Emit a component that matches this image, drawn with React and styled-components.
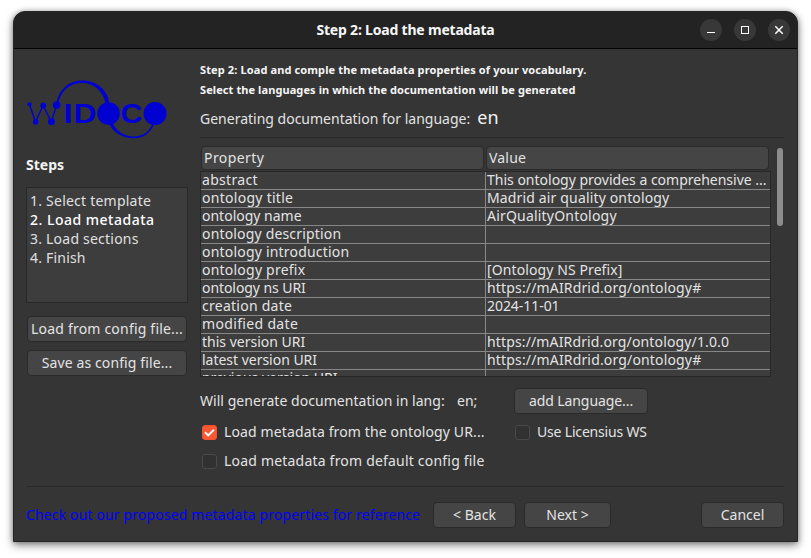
import React from 'react';
import styled, { createGlobalStyle } from 'styled-components';

const Global = createGlobalStyle`
  * { box-sizing: border-box; }
  body { margin: 0; background: #fff; overflow: hidden; }
`;

const Page = styled.div`
  width: 811px;
  height: 558px;
  padding: 11px 13px 16px;
  background: #fff;
  color: #e3e3e3;
  font: 14px/18px "Noto Sans", "Open Sans", sans-serif;
`;

const Window = styled.div`
  display: flex;
  flex-direction: column;
  width: 785px;
  height: 531px;
  background: #353535;
  border: 1px solid #262626;
  border-radius: 12px 12px 0 0;
  box-shadow: 0 3px 8px rgba(0, 0, 0, 0.5), 0 0 5px rgba(0, 0, 0, 0.2);
  overflow: hidden;
`;

const T = styled.span`
  white-space: pre;
  letter-spacing: ${(p) => p.$ls || 0}px;
`;

const TitleBar = styled.header`
  display: grid;
  grid-template-columns: 1fr auto 1fr;
  align-items: center;
  height: 37px;
  flex: none;
  background: #232323;
  border-bottom: 1px solid #050505;
`;

const Title = styled.h1`
  grid-column: 2;
  margin: 0;
  font-size: 14px;
  line-height: 18px;
  font-weight: 700;
  letter-spacing: -0.2px;
  color: #f7f7f7;
`;

const Controls = styled.div`
  display: flex;
  justify-content: flex-end;
  gap: 12px;
  padding-right: 7px;
`;

const Control = styled.button`
  display: grid;
  place-items: center;
  width: 22px;
  height: 22px;
  padding: 0;
  border: 0;
  border-radius: 50%;
  background: #383838;
`;

const Main = styled.main`
  display: grid;
  grid-template-columns: 162px 584px;
  column-gap: 12px;
  height: 437px;
  flex: none;
  padding-left: 12px;
`;

const Sidebar = styled.aside`
  display: flex;
  flex-direction: column;
  padding-top: 30px;
`;

const SidebarTitle = styled.h2`
  margin: 16px 0 12px;
  font-size: 14px;
  line-height: 20px;
  font-weight: 700;
  color: #f2f2f2;
`;

const StepList = styled.ol`
  list-style: none;
  margin: 0 0 13px;
  padding: 3px 3px;
  height: 116px;
  border: 1px solid #282828;
  background: #3d3d3d;
`;

const Step = styled.li`
  height: 19px;
  line-height: 19px;
  font-weight: ${(p) => (p.$current ? 500 : 400)};
  color: ${(p) => (p.$current ? '#ffffff' : '#e0e0e0')};
`;

const Button = styled.button`
  display: flex;
  align-items: center;
  justify-content: center;
  flex: none;
  width: ${(p) => p.$w}px;
  height: 26px;
  padding: 0;
  border: 1px solid #2a2a2a;
  border-radius: 4px;
  background: #454545;
  color: #e3e3e3;
  font: inherit;
`;

const SideButtons = styled.div`
  display: flex;
  flex-direction: column;
  align-items: center;
  gap: 8px;
`;

const Content = styled.section`
  display: flex;
  flex-direction: column;
  padding-top: 11px;
`;

const Heading = styled.p`
  margin: 0;
  height: 20px;
  font-size: 11px;
  line-height: 20px;
  font-weight: 700;
  color: #f5f5f5;
`;

const Language = styled.div`
  display: flex;
  align-items: baseline;
  gap: 7px;
  height: 37px;
  padding-top: 5px;
  line-height: 24px;
`;

const LanguageCode = styled.span`
  font-size: 18px;
  letter-spacing: 0.2px;
  color: #f2f2f2;
`;

const Rule = styled.hr`
  flex: none;
  align-self: center;
  width: ${(p) => p.$w}px;
  height: 1px;
  margin: 0;
  border: 0;
  background: #2a2a2a;
`;

const TableArea = styled.div`
  display: flex;
  height: 239px;
  gap: 5px;
`;

const TableFrame = styled.div`
  width: 571px;
  padding-top: 8px;
`;

const TableHead = styled.div`
  display: grid;
  grid-template-columns: 283px 283px;
  column-gap: 2px;
  height: 25px;
  padding-left: 1px;
`;

const HeadCell = styled.div`
  height: 24px;
  padding-left: 2px;
  line-height: 22px;
  border: 1px solid #2b2b2b;
  border-radius: 4px;
  background: #454545;
`;

const Viewport = styled.div`
  height: 206px;
  overflow: hidden;
  border: 1px solid #282828;
  background: #3d3d3d;
`;

const Row = styled.div`
  display: grid;
  grid-template-columns: 285px 285px;
  height: 18px;
  line-height: 15px;
`;

const Cell = styled.div`
  height: 18px;
  padding-left: 1px;
  border-right: 1px solid #878787;
  border-bottom: 1px solid #878787;
`;

const ScrollTrack = styled.div`
  width: 8px;
  padding: 10px 1px 0;
`;

const ScrollThumb = styled.div`
  height: 78px;
  border-radius: 3px;
  background: #8c8c8c;
`;

const AddRow = styled.div`
  display: grid;
  grid-template-columns: 257px 57px 134px;
  align-items: center;
  height: 26px;
  margin-top: 11px;
`;

const Options = styled.div`
  display: grid;
  grid-template-columns: 313px auto;
  grid-auto-rows: 29px;
  padding: 3px 0 0 2px;
`;

const Option = styled.label`
  display: flex;
  align-items: center;
  gap: 7px;
`;

const Box = styled.span`
  display: grid;
  place-items: center;
  width: 15px;
  height: 15px;
  margin-top: 2px;
  border-radius: 3px;
  border: 1px solid ${(p) => (p.$on ? '#f5512c' : '#494949')};
  background: ${(p) => (p.$on ? '#fa5735' : '#313131')};
`;

const Footer = styled.footer`
  display: flex;
  align-items: center;
  padding: 15px 12px 0;
`;

const Link = styled.a`
  width: 407px;
  color: #0000ff;
`;

const FooterButtons = styled.div`
  display: grid;
  grid-template-columns: 91px 177px 83px;
`;

const steps = [
  ['1. Select template', 0.23],
  ['2. Load metadata', 0.5],
  ['3. Load sections', 0.22],
  ['4. Finish', 0.2],
];

const rows = [
  ['abstract', 0.3, 'This ontology provides a comprehensive ...', 0],
  ['ontology title', 0.28, 'Madrid air quality ontology', 0.15],
  ['ontology name', 0, 'AirQualityOntology', 0.2],
  ['ontology description', 0.17],
  ['ontology introduction', 0.2],
  ['ontology prefix', 0.22, '[Ontology NS Prefix]', 0.1],
  ['ontology ns URI', -0.07, 'https://mAIRdrid.org/ontology#', 0.16],
  ['creation date', 0.26, '2024-11-01', -0.05],
  ['modified date', 0.34],
  ['this version URI', 0, 'https://mAIRdrid.org/ontology/1.0.0', 0.14],
  ['latest version URI', -0.02, 'https://mAIRdrid.org/ontology#', 0.16],
  ['previous version URI', 0],
];

function Logo() {
  return (
    <svg width="144" height="60" viewBox="26 79 144 60" fill="#0000d0">
      <path d="M29.5 104.3 35.5 122 43 105.5 51.3 121.7 56.6 105" fill="none" stroke="#0000d0" strokeWidth="1.4" />
      <circle cx="29.5" cy="104.3" r="2.1" />
      <circle cx="35.6" cy="122" r="2.7" />
      <circle cx="43.2" cy="105.5" r="2.9" />
      <circle cx="51.4" cy="121.7" r="3.4" />
      <circle cx="56.6" cy="105.1" r="3.8" />
      <path d="M56.4 104C58 91 68 80.5 82 80.5C97 80.5 107.5 90 109.4 103L105.4 103C103 91 94 82.9 82 82.9C69 82.9 60 92 58.3 104Z" />
      <path d="M109 123C112 132 122 138.3 134 138.3C144 138.3 151 132 154.2 124L152.4 124C149 132 143 136.4 134 136.4C124 136.4 116 131 112.8 123Z" />
      <text x="63.6" y="123.3" fontFamily="Liberation Sans" fontWeight="700" fontSize="27.5" textLength="9" lengthAdjust="spacingAndGlyphs">I</text>
      <text x="73.6" y="123.3" fontFamily="Liberation Sans" fontWeight="700" fontSize="27.5" textLength="23" lengthAdjust="spacingAndGlyphs">D</text>
      <text x="120.5" y="123" fontFamily="Liberation Sans" fontWeight="700" fontSize="27" textLength="22" lengthAdjust="spacingAndGlyphs">C</text>
      <circle cx="108.5" cy="113.6" r="11.3" />
      <circle cx="155" cy="113.6" r="11.5" />
    </svg>
  );
}

function Check({ on, ls, children }) {
  return (
    <Option>
      <Box $on={on}>
        {on && (
          <svg width="13" height="13" viewBox="0 0 13 13" fill="none" stroke="#fff" strokeWidth="2">
            <path d="M2 6.3 5.2 9.4 11 3.6" />
          </svg>
        )}
      </Box>
      <T $ls={ls}>{children}</T>
    </Option>
  );
}

export default function App() {
  return (
    <Page>
      <Global />
      <Window>
        <TitleBar>
          <Title>Step 2: Load the metadata</Title>
          <Controls>
            <Control aria-label="Minimize">
              <svg width="10" height="10"><path d="M1 7.5H9" stroke="#fff" /></svg>
            </Control>
            <Control aria-label="Maximize">
              <svg width="10" height="10"><rect x="1.5" y="1.5" width="7" height="7" fill="none" stroke="#fff" /></svg>
            </Control>
            <Control aria-label="Close">
              <svg width="10" height="10"><path d="M1.3 1.3 8.7 8.7M8.7 1.3 1.3 8.7" stroke="#fff" strokeWidth="1.5" /></svg>
            </Control>
          </Controls>
        </TitleBar>
        <Main>
          <Sidebar>
            <Logo />
            <SidebarTitle>Steps</SidebarTitle>
            <StepList>
              {steps.map(([name, ls], i) => (
                <Step key={name} $current={i === 1}><T $ls={ls}>{name}</T></Step>
              ))}
            </StepList>
            <SideButtons>
              <Button $w={160}><T $ls={0.2}>Load from config file...</T></Button>
              <Button $w={160}><T $ls={0.11}>Save as config file...</T></Button>
            </SideButtons>
          </Sidebar>
          <Content>
            <Heading><T $ls={0.12}>Step 2: Load and comple the metadata properties of your vocabulary.</T></Heading>
            <Heading><T $ls={0.09}>Select the languages in which the documentation will be generated</T></Heading>
            <Language>
              <T>Generating documentation for language:</T>
              <LanguageCode>en</LanguageCode>
            </Language>
            <Rule $w={584} />
            <TableArea>
              <TableFrame>
                <TableHead>
                  <HeadCell><T $ls={0.42}>Property</T></HeadCell>
                  <HeadCell><T $ls={0.2}>Value</T></HeadCell>
                </TableHead>
                <Viewport>
                  {rows.map(([name, a, value, b]) => (
                    <Row key={name}>
                      <Cell><T $ls={a}>{name}</T></Cell>
                      <Cell><T $ls={b}>{value}</T></Cell>
                    </Row>
                  ))}
                </Viewport>
              </TableFrame>
              <ScrollTrack><ScrollThumb /></ScrollTrack>
            </TableArea>
            <AddRow>
              <T $ls={0.04}>Will generate documentation in lang:</T>
              <T>en;</T>
              <Button $w={134}><T $ls={-0.08}>add Language...</T></Button>
            </AddRow>
            <Options>
              <Check on ls={0.13}>Load metadata from the ontology UR...</Check>
              <Check ls={-0.18}>Use Licensius WS</Check>
              <Check ls={0.2}>Load metadata from default config file</Check>
            </Options>
          </Content>
        </Main>
        <Rule $w={757} />
        <Footer>
          <Link><T $ls={0.14}>Check out our proposed metadata properties for reference</T></Link>
          <FooterButtons>
            <Button $w={83}><T>{'< Back'}</T></Button>
            <Button $w={87}><T>{'Next >'}</T></Button>
            <Button $w={83}><T>Cancel</T></Button>
          </FooterButtons>
        </Footer>
      </Window>
    </Page>
  );
}
